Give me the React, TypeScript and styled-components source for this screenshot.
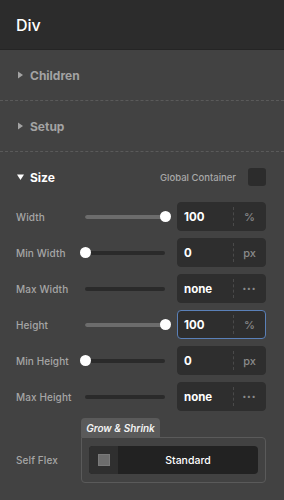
import React from 'react';
import styled, { createGlobalStyle } from 'styled-components';

const GlobalStyle = createGlobalStyle`
  html, body {
    margin: 0;
    padding: 0;
    background: #424242;
  }
  body {
    font-family: Inter, "Noto Sans", sans-serif;
    -webkit-font-smoothing: antialiased;
  }
`;

const Panel = styled.div`
  width: 284px;
  height: 500px;
  background: #424242;
  overflow: hidden;
`;

const Header = styled.div`
  height: 49px;
  display: flex;
  align-items: center;
  padding: 0 16px;
  background: #2c2c2c;
  border-bottom: 1px solid #252525;
  color: #fff;
  font-size: 16px;
  font-weight: 500;
`;

const Section = styled.div`
  border-bottom: 1px dashed #5a5a5a;
`;

const SectionHead = styled.div`
  height: 50px;
  display: flex;
  align-items: center;
  padding: 0 18px 0 17px;
  gap: 6px;
  color: ${(props: { open?: boolean }) => (props.open ? '#fff' : '#a3a3a3')};
  font-size: 12px;
  font-weight: 700;
`;

const Spacer = styled.div`
  flex: 1;
`;

const GlobalLabel = styled.span`
  font-size: 9.5px;
  font-weight: 500;
  color: #a8a8a8;
  margin-right: 6px;
`;

const Swatch = styled.div`
  width: 18px;
  height: 18px;
  border-radius: 3px;
  background: #2c2c2c;
`;

const Rows = styled.div`
  display: flex;
  flex-direction: column;
  gap: 7px;
  padding-bottom: 7px;
`;

const Row = styled.div`
  display: grid;
  grid-template-columns: 57px 80px 89px;
  column-gap: 12px;
  align-items: center;
  height: 29px;
  padding-left: 16px;
`;

const Label = styled.span`
  font-size: 10px;
  font-weight: 500;
  color: #a6a6a6;
  letter-spacing: 0.1px;
  white-space: nowrap;
`;

const Track = styled.div`
  position: relative;
  height: 4px;
  border-radius: 2px;
  background: #2a2a2a;
`;

const Fill = styled.div`
  height: 100%;
  border-radius: 2px;
  background: #6c6c6c;
`;

const Thumb = styled.div`
  position: absolute;
  top: 50%;
  width: 11px;
  height: 11px;
  margin: -5.5px 0 0 -5.5px;
  border-radius: 50%;
  background: #fff;
`;

const InputBox = styled.div`
  height: 29px;
  box-sizing: border-box;
  display: flex;
  align-items: center;
  background: #2e2e2e;
  border-radius: 4px;
  border: 1px solid
    ${(props: { focused?: boolean }) => (props.focused ? '#5a80b8' : '#2e2e2e')};
`;

const Value = styled.span`
  flex: 0 0 49px;
  padding-left: 6px;
  font-size: 11.5px;
  font-weight: 700;
  color: #fff;
`;

const Unit = styled.span`
  flex: 1;
  align-self: stretch;
  display: flex;
  align-items: center;
  justify-content: center;
  margin: 4px 0;
  border-left: 1px dashed #4a4a4a;
  color: #8a8a8a;
  font-size: 11px;
  font-weight: 500;
`;

const FlexRow = styled.div`
  display: flex;
  align-items: flex-end;
  padding-left: 16px;
`;

const FlexLabel = styled(Label)`
  width: 65px;
  height: 46px;
  display: flex;
  align-items: center;
`;

const FlexGroup = styled.div`
  width: 185px;
  display: flex;
  flex-direction: column;
`;

const Tab = styled.div`
  align-self: flex-start;
  width: 79px;
  height: 19px;
  box-sizing: border-box;
  display: flex;
  align-items: center;
  justify-content: center;
  background: #5a5a5a;
  border-radius: 4px 4px 0 0;
  color: #f2f2f2;
  font-size: 10px;
  font-weight: 600;
  font-style: italic;
  white-space: nowrap;
`;

const FlexBox = styled.div`
  height: 46px;
  box-sizing: border-box;
  padding: 8px 7px;
  border: 1px solid #5a5a5a;
  border-radius: 0 4px 4px 4px;
`;

const Select = styled.div`
  height: 100%;
  display: flex;
  border-radius: 4px;
  overflow: hidden;
  background: #222;
`;

const SelectIcon = styled.div`
  width: 29px;
  display: flex;
  align-items: center;
  justify-content: center;
  background: #2f2f2f;
`;

const Square = styled.div`
  width: 10px;
  height: 10px;
  background: #6e6e6e;
  border: 1px solid #7a7a7a;
`;

const SelectText = styled.div`
  flex: 1;
  display: flex;
  align-items: center;
  justify-content: center;
  color: #fff;
  font-size: 10.5px;
  font-weight: 500;
`;

const Caret = ({ open }: { open?: boolean }) => (
  <svg width='7' height='8' viewBox='0 0 7 8'>
    {open ? (
      <path d='M0 1.5 L7 1.5 L3.5 7 Z' fill='#fff' />
    ) : (
      <path d='M1 0.5 L6 4 L1 7.5 Z' fill='#a3a3a3' />
    )}
  </svg>
);

type SizeRow = {
  label: string;
  value: string;
  unit: string;
  pct: number | null;
  focused?: boolean;
};

const sizeRows: SizeRow[] = [
  { label: 'Width', value: '100', unit: '%', pct: 100 },
  { label: 'Min Width', value: '0', unit: 'px', pct: 0 },
  { label: 'Max Width', value: 'none', unit: '•••', pct: null },
  { label: 'Height', value: '100', unit: '%', pct: 100, focused: true },
  { label: 'Min Height', value: '0', unit: 'px', pct: 0 },
  { label: 'Max Height', value: 'none', unit: '•••', pct: null },
];

const Slider: React.FC<{ pct: number | null }> = ({ pct }) => (
  <Track>
    {pct !== null && (
      <>
        <Fill style={{ width: `${pct}%` }} />
        <Thumb style={{ left: `${pct}%` }} />
      </>
    )}
  </Track>
);

const App: React.FC = () => {
  return (
    <Panel>
      <GlobalStyle />
      <Header>Div</Header>
      <Section>
        <SectionHead>
          <Caret />
          Children
        </SectionHead>
      </Section>
      <Section>
        <SectionHead>
          <Caret />
          Setup
        </SectionHead>
      </Section>
      <div>
        <SectionHead open>
          <Caret open />
          Size
          <Spacer />
          <GlobalLabel>Global Container</GlobalLabel>
          <Swatch />
        </SectionHead>
        <Rows>
          {sizeRows.map((r) => (
            <Row key={r.label}>
              <Label>{r.label}</Label>
              <Slider pct={r.pct} />
              <InputBox focused={r.focused}>
                <Value>{r.value}</Value>
                <Unit style={r.unit === '•••' ? { fontSize: 7, letterSpacing: 1 } : undefined}>
                  {r.unit}
                </Unit>
              </InputBox>
            </Row>
          ))}
        </Rows>
        <FlexRow>
          <FlexLabel>Self Flex</FlexLabel>
          <FlexGroup>
            <Tab>Grow &amp; Shrink</Tab>
            <FlexBox>
              <Select>
                <SelectIcon>
                  <Square />
                </SelectIcon>
                <SelectText>Standard</SelectText>
              </Select>
            </FlexBox>
          </FlexGroup>
        </FlexRow>
      </div>
    </Panel>
  );
};

export default App;
